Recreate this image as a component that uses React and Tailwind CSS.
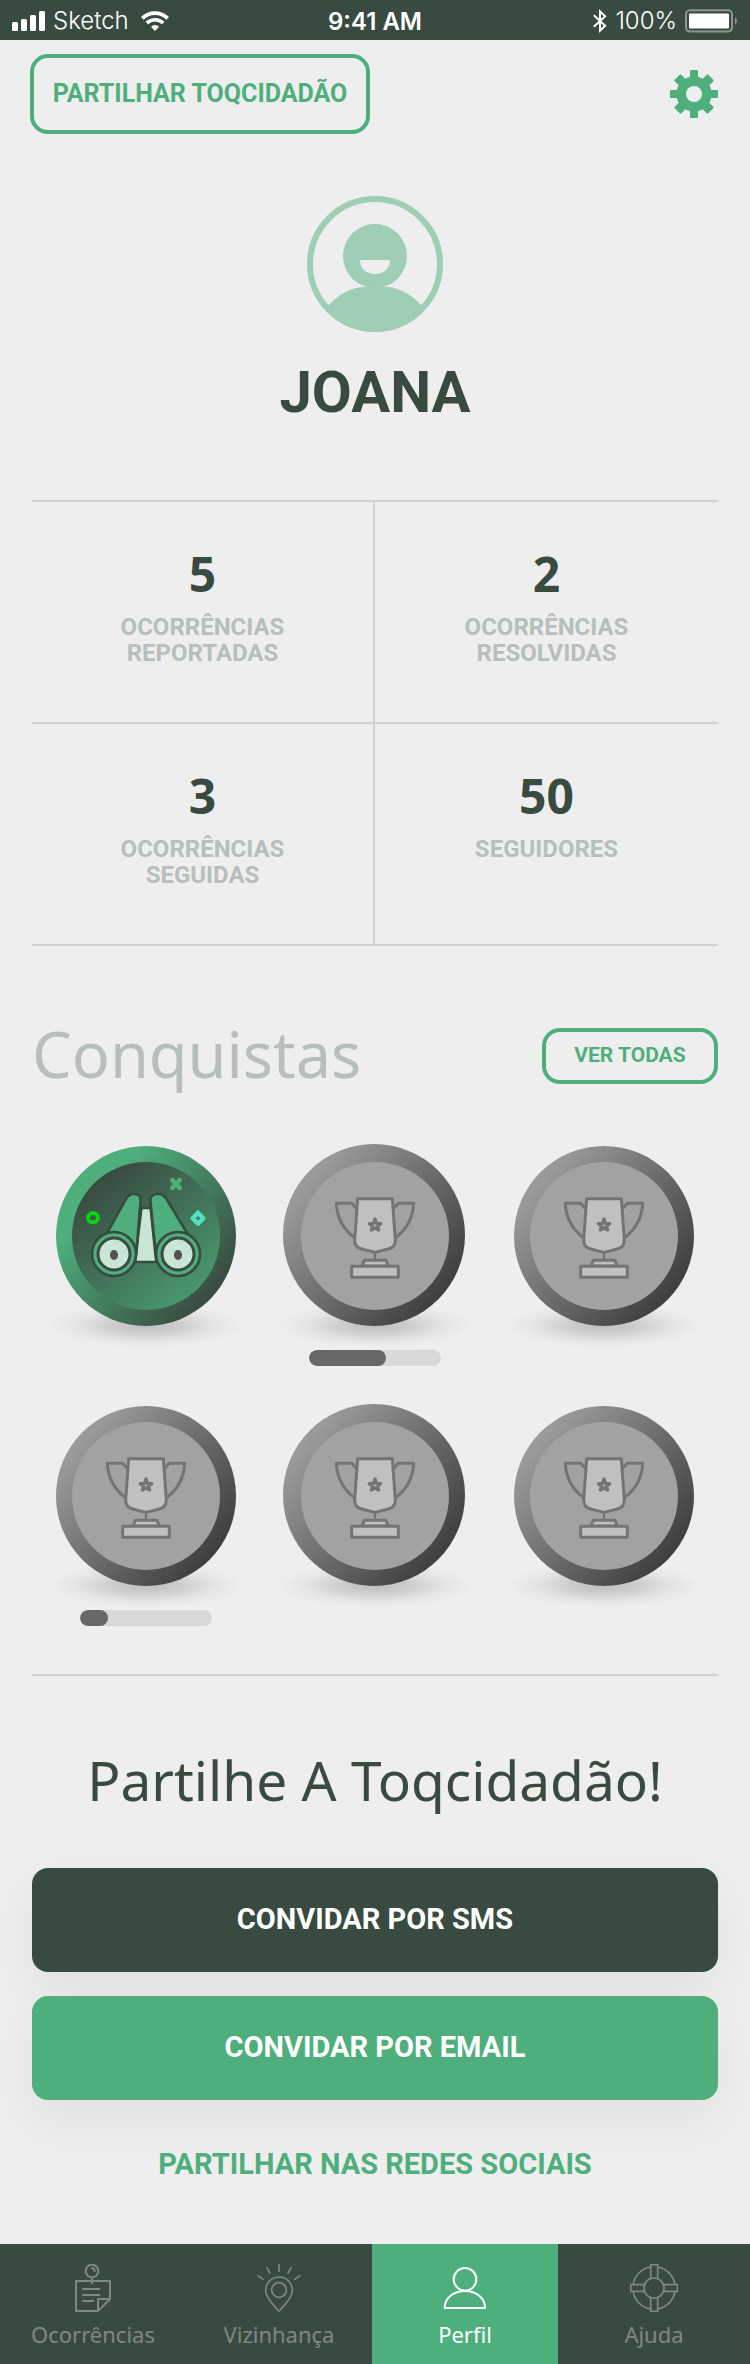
import React from "react";

const stats = [
  { value: "5", label: ["OCORRÊNCIAS", "REPORTADAS"] },
  { value: "2", label: ["OCORRÊNCIAS", "RESOLVIDAS"] },
  { value: "3", label: ["OCORRÊNCIAS", "SEGUIDAS"] },
  { value: "50", label: ["SEGUIDORES"] },
];

const achievements = [
  { id: 1, unlocked: true },
  { id: 2, progress: 58 },
  { id: 3 },
  { id: 4, progress: 21 },
  { id: 5 },
  { id: 6 },
];

function StatusBar() {
  return (
    <div className="grid h-10 grid-cols-3 items-center bg-[#394b40] px-3 font-['Inter',sans-serif] text-[23px] leading-10 text-white">
      <div className="flex items-center gap-2">
        <svg className="h-5 w-[33px]" viewBox="0 0 33 20" fill="currentColor" aria-hidden="true">
          <rect x="0" y="11" width="6" height="9" rx="1.5" />
          <rect x="9" y="8" width="6" height="12" rx="1.5" />
          <rect x="18" y="4" width="6" height="16" rx="1.5" />
          <rect x="27" y="0" width="6" height="20" rx="1.5" />
        </svg>
        <span className="text-[24px] font-light">Sketch</span>
        <svg className="ml-1 h-5 w-7" viewBox="0 0 28 20" fill="none" stroke="currentColor" strokeWidth="3.6" aria-hidden="true">
          <path d="M1.3 7.4a18 18 0 0 1 25.4 0" />
          <path d="M5.8 12.1a11.6 11.6 0 0 1 16.4 0" />
          <path d="M14 20l-4-4.3a5.8 5.8 0 0 1 8 0z" fill="currentColor" stroke="none" />
        </svg>
      </div>
      <div className="pt-0.5 text-center text-[24px] font-semibold">9:41 AM</div>
      <div className="flex items-center justify-end gap-2">
        <svg className="h-6 w-[14px]" viewBox="0 0 14 24" fill="none" stroke="currentColor" strokeWidth="2" aria-hidden="true">
          <path d="M.8 6.2l11.4 10.6L7 21.6V2.4l5.2 4.8L.8 17.8" />
        </svg>
        <span className="text-[24px] font-light">100%</span>
        <svg className="h-6 w-[53px]" viewBox="0 0 53 24" fill="none" aria-hidden="true">
          <rect x="1" y="1.2" width="46" height="21.4" rx="4" stroke="#8b9690" strokeWidth="2" />
          <rect x="4" y="4.4" width="40" height="15" rx="1" fill="#fff" />
          <path d="M50 8.2a4.6 4.6 0 0 1 0 7.6z" fill="#8b9690" />
        </svg>
      </div>
    </div>
  );
}

function GearIcon() {
  return (
    <svg className="size-12" viewBox="-72 -72 144 144" aria-hidden="true">
      <g fill="#4eaf7c">
        <rect x="-12" y="-72" width="24" height="144" rx="2" />
        <rect x="-72" y="-12" width="144" height="24" rx="2" />
        <rect x="-14" y="-71" width="28" height="142" rx="3" transform="rotate(45)" />
        <rect x="-14" y="-71" width="28" height="142" rx="3" transform="rotate(-45)" />
        <circle r="53" />
      </g>
      <circle r="24" fill="#eee" />
    </svg>
  );
}

function Avatar() {
  return (
    <svg className="size-[136px]" viewBox="174 48 408 408" role="img" aria-label="Joana">
      <defs>
        <clipPath id="avatarClip">
          <circle cx="378" cy="252" r="204" />
        </clipPath>
      </defs>
      <circle cx="378" cy="252" r="195" fill="none" stroke="#9eceb5" strokeWidth="18" />
      <g fill="#9eceb5">
        <circle cx="378" cy="228" r="96" />
        <path d="M236 379C268 342 308 322 348 320C360 318 396 318 408 320C450 322 488 342 520 379L560 470H190Z" clipPath="url(#avatarClip)" />
      </g>
      <path d="M333 240h90c0 26-18 42-45 42s-45-16-45-42z" fill="#eee" />
    </svg>
  );
}

function Medal({ children, unlocked, large }) {
  return (
    <svg
      className="h-[220px] w-[212px]"
      viewBox="0 0 636 660"
      role="img"
      aria-label={unlocked ? "Conquista desbloqueada" : "Conquista por desbloquear"}
    >
      <ellipse cx="318" cy="586" rx="296" ry="68" fill="url(#medalShadow)" />
      <circle
        cx={large ? 315 : 318}
        cy={large ? 315 : 318}
        r={large ? 273 : 270}
        fill={unlocked ? "url(#greenRing)" : "url(#greyRing)"}
      />
      <circle cx="318" cy="318" r="222" fill={unlocked ? "url(#greenFace)" : "#a2a2a2"} />
      {children}
    </svg>
  );
}

function MedalPaints() {
  return (
    <svg className="absolute size-0" aria-hidden="true">
      <defs>
        <radialGradient id="medalShadow">
          <stop offset="0" stopColor="#000" stopOpacity=".2" />
          <stop offset=".35" stopColor="#000" stopOpacity=".14" />
          <stop offset=".7" stopColor="#000" stopOpacity=".04" />
          <stop offset="1" stopColor="#000" stopOpacity="0" />
        </radialGradient>
        <linearGradient id="greenRing" x1=".14" y1=".2" x2=".87" y2=".83">
          <stop offset="0" stopColor="#4eaf7c" />
          <stop offset=".12" stopColor="#4eaf7c" />
          <stop offset="1" stopColor="#394b40" />
        </linearGradient>
        <linearGradient id="greenFace" x1=".18" y1=".12" x2=".85" y2=".95">
          <stop offset="0" stopColor="#394b40" />
          <stop offset="1" stopColor="#4a9c71" />
        </linearGradient>
        <linearGradient id="greyRing" x1=".14" y1=".2" x2=".87" y2=".83">
          <stop offset="0" stopColor="#9a9a9a" />
          <stop offset="1" stopColor="#3f3f3f" />
        </linearGradient>
      </defs>
    </svg>
  );
}

function Binoculars() {
  return (
    <g>
      <path d="M304 234h28l17 162h-64z" fill="#c8e5d6" stroke="#394b40" strokeWidth="8" />
      <g fill="#4eaf7c" stroke="#394b40" strokeWidth="8">
        <path d="M202 308L257 208C264 196 274 191 285 192C297 193 303 200 302 212L289 368Z" />
        <path d="M443 312L380 208C373 196 363 191 352 192C338 193 330 201 331 212L347 368Z" />
        <circle cx="222" cy="372" r="66" />
        <circle cx="414" cy="372" r="66" />
      </g>
      <g fill="#c8e5d6" stroke="#394b40" strokeWidth="9">
        <circle cx="222" cy="372" r="48" />
        <circle cx="414" cy="372" r="48" />
      </g>
      <ellipse cx="222" cy="375" rx="12" ry="15" fill="#505050" />
      <ellipse cx="414" cy="375" rx="12" ry="15" fill="#505050" />
      <ellipse cx="159" cy="263" rx="15" ry="14" fill="none" stroke="#0ad312" strokeWidth="12" />
      <path d="M397 150l22 24M419 150l-22 24" stroke="#4eaf7c" strokeWidth="14" strokeLinecap="round" />
      <path d="M474 248l16 17-16 16-16-16z" fill="none" stroke="#4fe3c1" strokeWidth="13" strokeLinejoin="round" />
    </g>
  );
}

function Trophy() {
  return (
    <g stroke="#747474" strokeWidth="9" strokeLinejoin="round">
      <path d="M263 236L248 220H202C204 262 224 298 255 322M373 236L388 220H434C432 262 412 298 381 322" fill="none" />
      <path d="M318 366v24" strokeWidth="7" />
      <path d="M266 206H370L379 330C379 345 371 354 358 357L318 367L278 357C265 354 257 345 257 330Z" fill="#c0c0c0" />
      <path d="M279 408L286 391H351L358 408Z" fill="#c0c0c0" />
      <path d="M248 409H388V442H248Z" fill="#c0c0c0" />
      <path d="M318 267L322 280L335 281L325 289L329 300L318 294L307 300L311 289L301 281L314 280Z" fill="none" strokeWidth="10" />
    </g>
  );
}

function NoteIcon() {
  return (
    <svg className="size-12" viewBox="210 102 144 144" fill="none" stroke="currentColor" strokeWidth="6" strokeLinecap="round" strokeLinejoin="round" aria-hidden="true">
      <circle cx="279" cy="123" r="19" />
      <path d="M279 115c5 0 8 3 8 8M279 143v17M231 153H333V207L297 243H231ZM297 243V207H333M252 177H301M252 195H301M252 213H283" />
    </svg>
  );
}

function PinIcon() {
  return (
    <svg className="size-12" viewBox="766 102 144 144" fill="none" stroke="currentColor" strokeWidth="5" strokeLinecap="round" aria-hidden="true">
      <path d="M838 243C826 229 798 207 798 181A40 40 0 0 1 878 181C878 207 850 229 838 243Z" strokeLinejoin="round" />
      <circle cx="838" cy="180" r="22" />
      <path d="M838 104V124M802 113L810 129M874 113L865 129M775 137L790 148M901 137L885 148" />
    </svg>
  );
}

function PersonIcon() {
  return (
    <svg className="size-12" viewBox="202 102 144 144" fill="none" stroke="currentColor" strokeWidth="6" strokeLinejoin="round" aria-hidden="true">
      <circle cx="274" cy="148" r="34" />
      <path d="M213 234C213 204 240 183 274 183S334 204 334 234Z" />
    </svg>
  );
}

function BuoyIcon() {
  return (
    <svg className="size-12" viewBox="768 102 144 144" fill="none" stroke="currentColor" strokeWidth="5" aria-hidden="true">
      <circle cx="840" cy="174" r="30" />
      <path d="M830 145V104H851V145M830 203V244H851V203M811 164H770V184H811M869 164H910V184H869" />
      <path d="M830 111A64 64 0 0 0 777 164M851 111A64 64 0 0 1 903 164M777 184A64 64 0 0 0 830 237M903 184A64 64 0 0 1 851 237" />
    </svg>
  );
}

const tabs = [
  { name: "Ocorrências", Icon: NoteIcon },
  { name: "Vizinhança", Icon: PinIcon },
  { name: "Perfil", Icon: PersonIcon, active: true },
  { name: "Ajuda", Icon: BuoyIcon },
];

export default function App() {
  return (
    <div className="flex min-h-screen flex-col bg-[#eee] font-['Noto_Sans',sans-serif] text-[#394b40]">
      <StatusBar />
      <MedalPaints />

      <header className="flex items-center justify-between pt-[14px] pr-8 pl-[30px]">
        <button type="button" className="h-20 w-[340px] rounded-[18px] border-4 border-[#4eaf7c] font-['Roboto',sans-serif] text-[25px] font-bold whitespace-nowrap text-[#4eaf7c]">
          PARTILHAR TOQCIDADÃO
        </button>
        <button type="button" aria-label="Definições">
          <GearIcon />
        </button>
      </header>

      <main className="flex flex-1 flex-col px-8">
        <section className="mt-[62px] flex flex-col items-center">
          <Avatar />
          <h1 className="mt-6 font-['Roboto',sans-serif] text-[58px] leading-[72px] font-bold">JOANA</h1>
        </section>

        <dl className="mt-[72px] grid grid-cols-2 border-t-2 border-[#d3d3d3] text-center">
          {stats.map((s) => (
            <div key={s.value} className="flex flex-col border-b-2 border-[#d3d3d3] pt-11 pb-14 odd:border-r-2">
              <dd className="text-[48px] leading-[56px] font-bold">{s.value}</dd>
              <dt className="mt-3 font-['Roboto',sans-serif] text-[24px] leading-[26px] font-bold text-[#b7bebb]">
                {s.label.map((line) => (
                  <span key={line} className="block">{line}</span>
                ))}
              </dt>
            </div>
          ))}
        </dl>

        <section className="border-b-2 border-[#d3d3d3] pb-12">
          <div className="mt-[72px] flex items-center justify-between">
            <h2 className="pb-1 text-[63px] leading-[72px] text-[#b7bebb]">Conquistas</h2>
            <button type="button" className="h-14 w-44 rounded-[18px] border-4 border-[#4eaf7c] font-['Roboto',sans-serif] text-[21px] font-bold text-[#4eaf7c]">
              VER TODAS
            </button>
          </div>
          <ul className="mt-9 grid grid-cols-3 gap-y-6">
            {achievements.map((a) => (
              <li key={a.id} className="flex flex-col items-center">
                <Medal unlocked={a.unlocked} large={a.id % 3 === 2}>
                  {a.unlocked ? <Binoculars /> : <Trophy />}
                </Medal>
                <div className="h-4">
                  {a.progress && (
                    <div
                      role="progressbar"
                      aria-label="Progresso"
                      aria-valuenow={a.progress}
                      aria-valuemin={0}
                      aria-valuemax={100}
                      className="h-4 w-[132px] overflow-hidden rounded-full bg-[#d8d8d8]"
                    >
                      <div className="h-4 rounded-full bg-[#686868]" style={{ width: `${a.progress}%` }} />
                    </div>
                  )}
                </div>
              </li>
            ))}
          </ul>
        </section>

        <section className="flex flex-col pb-[60px]">
          <h2 className="mt-[68px] text-center text-[55px] leading-[72px]">Partilhe A Toqcidadão!</h2>
          <div className="mt-[52px] flex flex-col gap-6 font-['Roboto',sans-serif] text-[29px] font-bold text-white">
            <button type="button" className="h-[104px] rounded-2xl bg-[#394b40] shadow-[0_20px_50px_rgba(0,0,0,0.06)]">
              CONVIDAR POR SMS
            </button>
            <button type="button" className="h-[104px] rounded-2xl bg-[#4eaf7c] shadow-[0_20px_50px_rgba(0,0,0,0.06)]">
              CONVIDAR POR EMAIL
            </button>
          </div>
          <a href="#partilhar" className="mt-11 self-center font-['Roboto',sans-serif] text-[29px] leading-10 font-bold text-[#4eaf7c]">
            PARTILHAR NAS REDES SOCIAIS
          </a>
        </section>
      </main>

      <nav className="grid h-[120px] grid-cols-[31fr_31fr_31fr_32fr] bg-[#394b40]">
        {tabs.map(({ name, Icon, active }) => (
          <a
            key={name}
            href={`#${name}`}
            aria-current={active ? "page" : undefined}
            className={
              active
                ? "flex flex-col items-center bg-[#4eaf7c] pt-5 text-white"
                : "flex flex-col items-center pt-5 text-[#7d8982]"
            }
          >
            <Icon />
            <span className="mt-2 text-[22px] leading-7">{name}</span>
          </a>
        ))}
      </nav>
    </div>
  );
}
